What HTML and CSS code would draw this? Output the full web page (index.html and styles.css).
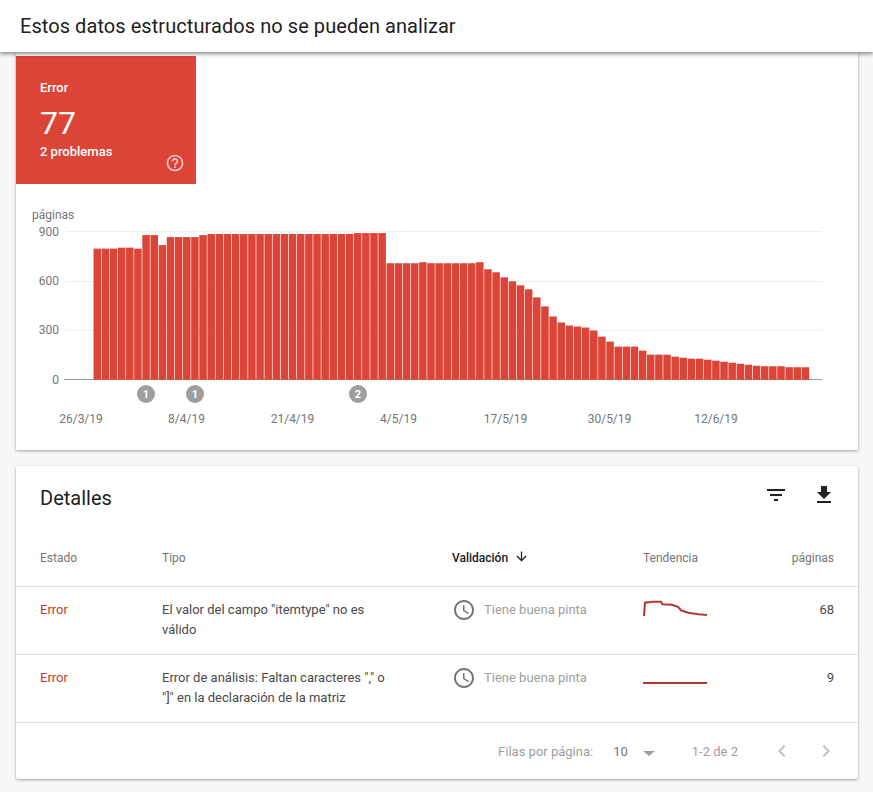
FILE: index.html
```html
<!DOCTYPE html>
<html lang="es">
<head>
<meta charset="utf-8">
<title>Estos datos estructurados no se pueden analizar</title>
<link rel="stylesheet" href="styles.css">
</head>
<body>
<header class="topbar"><h1 class="page-title">Estos datos estructurados no se pueden analizar</h1></header>
<main class="content">
  <section class="card card-summary">
    <div class="tile">
      <div class="tile-label">Error</div>
      <div class="tile-value">77</div>
      <div class="tile-sub">2 problemas</div>
      <svg class="tile-help" viewBox="0 0 24 24"><path d="M11 18h2v-2h-2v2zm1-16C6.48 2 2 6.48 2 12s4.48 10 10 10 10-4.48 10-10S17.52 2 12 2zm0 18c-4.41 0-8-3.59-8-8s3.59-8 8-8 8 3.59 8 8-3.59 8-8 8zm0-14c-2.21 0-4 1.79-4 4h2c0-1.1.9-2 2-2s2 .9 2 2c0 2-3 1.75-3 5h2c0-2.25 3-2.5 3-5 0-2.21-1.79-4-4-4z"/></svg>
    </div>
    <svg class="chart" viewBox="16 184 842 266" width="842" height="266">
      <text class="axis" x="32" y="219">páginas</text>
      <g class="grid">
        <line x1="66" x2="822" y1="231.5" y2="231.5"/>
        <line x1="66" x2="822" y1="281.5" y2="281.5"/>
        <line x1="66" x2="822" y1="330.5" y2="330.5"/>
      </g>
      <line class="base" x1="64" x2="822" y1="379.5" y2="379.5"/>
      <g class="axis axis-y">
        <text x="59" y="236">900</text>
        <text x="59" y="285">600</text>
        <text x="59" y="334">300</text>
        <text x="59" y="384">0</text>
      </g>
      <g class="bars" transform="matrix(1 0 0 -1.005 0 379.8)">
        <rect x="93.5" height="130.5"/><rect x="101.64" height="130.5"/><rect x="109.78" height="130.5"/><rect x="117.92" height="131.5"/><rect x="126.06" height="131.5"/><rect x="134.2" height="130.5"/><rect x="142.34" height="144"/><rect x="150.48" height="144"/><rect x="158.62" height="134"/><rect x="166.76" height="142"/>
        <rect x="174.9" height="142"/><rect x="183.04" height="142"/><rect x="191.18" height="142"/><rect x="199.32" height="144"/><rect x="207.46" height="145"/><rect x="215.6" height="145"/><rect x="223.74" height="145"/><rect x="231.88" height="145"/><rect x="240.02" height="145"/><rect x="248.16" height="145"/>
        <rect x="256.3" height="145"/><rect x="264.44" height="145"/><rect x="272.58" height="145"/><rect x="280.72" height="145"/><rect x="288.86" height="145"/><rect x="297" height="145"/><rect x="305.14" height="145"/><rect x="313.28" height="145"/><rect x="321.42" height="145"/><rect x="329.56" height="145"/>
        <rect x="337.7" height="145"/><rect x="345.84" height="145"/><rect x="353.98" height="146"/><rect x="362.12" height="146"/><rect x="370.26" height="146"/><rect x="378.4" height="146"/><rect x="386.54" height="116"/><rect x="394.68" height="116"/><rect x="402.82" height="116"/><rect x="410.96" height="116"/>
        <rect x="419.1" height="117"/><rect x="427.24" height="116"/><rect x="435.38" height="116"/><rect x="443.52" height="116"/><rect x="451.66" height="116"/><rect x="459.8" height="116"/><rect x="467.94" height="116"/><rect x="476.08" height="117"/><rect x="484.22" height="110"/><rect x="492.36" height="107"/>
        <rect x="500.5" height="102"/><rect x="508.64" height="98"/><rect x="516.78" height="94"/><rect x="524.92" height="90"/><rect x="533.06" height="82"/><rect x="541.2" height="73"/><rect x="549.34" height="63"/><rect x="557.48" height="57"/><rect x="565.62" height="54"/><rect x="573.76" height="53"/>
        <rect x="581.9" height="52"/><rect x="590.04" height="49"/><rect x="598.18" height="43"/><rect x="606.32" height="38"/><rect x="614.46" height="33"/><rect x="622.6" height="33"/><rect x="630.74" height="33"/><rect x="638.88" height="29"/><rect x="647.02" height="25"/><rect x="655.16" height="25"/>
        <rect x="663.3" height="25"/><rect x="671.44" height="23"/><rect x="679.58" height="22"/><rect x="687.72" height="21"/><rect x="695.86" height="21"/><rect x="704" height="20"/><rect x="712.14" height="19"/><rect x="720.28" height="18"/><rect x="728.42" height="17"/><rect x="736.56" height="16"/>
        <rect x="744.7" height="15"/><rect x="752.84" height="14"/><rect x="760.98" height="13.5"/><rect x="769.12" height="13.5"/><rect x="777.26" height="13.5"/><rect x="785.4" height="12.5"/><rect x="793.54" height="12.5"/><rect x="801.68" height="12.5"/>
      </g>
      <g class="marker"><circle cx="146" cy="394" r="9"/><text x="146" y="398">1</text></g>
      <g class="marker"><circle cx="195" cy="394" r="9"/><text x="195" y="398">1</text></g>
      <g class="marker"><circle cx="358" cy="394" r="9"/><text x="358" y="398">2</text></g>
      <g class="axis axis-x">
        <text x="81" y="423">26/3/19</text>
        <text x="186.5" y="423">8/4/19</text>
        <text x="292.5" y="423">21/4/19</text>
        <text x="398.5" y="423">4/5/19</text>
        <text x="505.5" y="423">17/5/19</text>
        <text x="609.5" y="423">30/5/19</text>
        <text x="716" y="423">12/6/19</text>
      </g>
    </svg>
  </section>

  <section class="card card-details">
    <div class="details-head">
      <h2 class="details-title">Detalles</h2>
      <div class="details-actions">
        <svg class="icon" viewBox="0 0 24 24"><path d="M10 18h4v-2h-4v2zM3 6v2h18V6H3zm3 7h12v-2H6v2z"/></svg>
        <svg class="icon" viewBox="0 0 24 24"><path d="M19 9h-4V3H9v6H5l7 7 7-7zM5 18v2h14v-2H5z"/></svg>
      </div>
    </div>
    <div class="row row-head">
      <div>Estado</div>
      <div>Tipo</div>
      <div class="sorted">Validación
        <svg class="sort-icon" viewBox="0 0 24 24"><path d="M20 12l-1.41-1.41L13 16.17V4h-2v12.17l-5.58-5.59L4 12l8 8 8-8z"/></svg>
      </div>
      <div>Tendencia</div>
      <div class="num">páginas</div>
    </div>
    <div class="row row-data">
      <div class="status">Error</div>
      <div class="type">El valor del campo "itemtype" no es válido</div>
      <div class="validation">
        <svg class="clock" viewBox="0 0 24 24"><path d="M11.99 2C6.47 2 2 6.48 2 12s4.47 10 9.99 10C17.52 22 22 17.52 22 12S17.52 2 11.99 2zM12 20c-4.42 0-8-3.58-8-8s3.58-8 8-8 8 3.58 8 8-3.58 8-8 8zm.5-13H11v6l5.25 3.15.75-1.23-4.5-2.67z"/></svg>
        <span>Tiene buena pinta</span>
      </div>
      <svg class="spark" viewBox="0 0 66 20" width="66" height="20"><polyline points="1,17 2,3.7 10,2.8 18,2.7 19.3,5.3 29,5.7 35.3,8 38,11.3 45.3,13.7 55.3,15.3 64,16"/></svg>
      <div class="num count">68</div>
    </div>
    <div class="row row-data">
      <div class="status">Error</div>
      <div class="type">Error de análisis: Faltan caracteres "," o "]" en la declaración de la matriz</div>
      <div class="validation">
        <svg class="clock" viewBox="0 0 24 24"><path d="M11.99 2C6.47 2 2 6.48 2 12s4.47 10 9.99 10C17.52 22 22 17.52 22 12S17.52 2 11.99 2zM12 20c-4.42 0-8-3.58-8-8s3.58-8 8-8 8 3.58 8 8-3.58 8-8 8zm.5-13H11v6l5.25 3.15.75-1.23-4.5-2.67z"/></svg>
        <span>Tiene buena pinta</span>
      </div>
      <svg class="spark" viewBox="0 0 66 20" width="66" height="20"><polyline points="0,16 64,16"/></svg>
      <div class="num count">9</div>
    </div>
    <div class="pager">
      <span class="pager-label">Filas por página:</span>
      <span class="pager-size">10</span>
      <span class="pager-caret"></span>
      <span class="pager-range">1-2 de 2</span>
      <svg class="chev" viewBox="0 0 24 24"><path d="M15.41 7.41L14 6l-6 6 6 6 1.41-1.41L10.83 12z"/></svg>
      <svg class="chev" viewBox="0 0 24 24"><path d="M10 6L8.59 7.41 13.17 12l-4.58 4.59L10 18l6-6z"/></svg>
    </div>
  </section>
</main>
</body>
</html>
```
FILE: styles.css
```css
* { box-sizing: border-box; }
html, body { margin: 0; height: 792px; overflow: hidden; }
body { background: #f8f8f8; font-family: Roboto, sans-serif; color: #212121; }

.topbar {
  position: relative;
  z-index: 2;
  height: 52px;
  background: #fff;
  display: flex;
  align-items: center;
  padding: 0 20px;
  box-shadow: 0 2px 4px rgba(0, 0, 0, .45);
}
.page-title { margin: 0; font-size: 20px; font-weight: 400; color: #212121; letter-spacing: .065px; }

.content { padding: 0 15px 0 16px; display: flex; flex-direction: column; gap: 16px; }
.card { background: #fff; box-shadow: 0 1px 3px rgba(0, 0, 0, .35); }
.card-summary { height: 398px; padding-top: 4px; }
.card-details { height: 313px; border-radius: 2px; }

.tile {
  position: relative;
  width: 180px;
  height: 128px;
  background: #db4437;
  color: #fff;
  padding: 24px 24px 0;
}
.tile-label { font-size: 13px; font-weight: 500; line-height: 16px; }
.tile-value { font-size: 32px; line-height: 40px; margin-top: 7px; }
.tile-sub { font-size: 13px; font-weight: 500; line-height: 16px; margin-top: 1px; }
.tile-help { position: absolute; right: 11px; bottom: 11px; width: 20px; height: 20px; fill: rgba(255, 255, 255, .7); }

.chart { display: block; }
.chart text { font-family: Roboto, sans-serif; }
.axis { font-size: 12px; fill: #757575; }
.axis-y { text-anchor: end; }
.axis-x { text-anchor: middle; }
.grid line { stroke: #eeeeee; stroke-width: 1; }
.base { stroke: #9e9e9e; stroke-width: 1; }
.bars rect { width: 7.5px; fill: #db4437; }
.marker circle { fill: #9e9e9e; }
.marker text { fill: #fff; font-size: 11px; font-weight: 700; text-anchor: middle; }

.details-head {
  height: 64px;
  padding: 17px 22px 0 24px;
  display: flex;
  justify-content: space-between;
  align-items: flex-start;
}
.details-title { margin: -1px 0 0; font-size: 20px; font-weight: 400; line-height: 32px; color: #212121; }
.details-actions { display: flex; gap: 24px; }
.icon { width: 24px; height: 24px; fill: #212121; }

.row {
  display: grid;
  grid-template-columns: 122px 290px 191px 1fr 60px;
  padding: 0 24px;
  border-bottom: 1px solid #e0e0e0;
}
.row-head {
  height: 57px;
  align-items: center;
  font-size: 12px;
  color: #757575;
  padding-bottom: 1px;
}
.sorted { color: #212121; font-weight: 500; display: flex; align-items: center; gap: 6px; }
.sort-icon { width: 15px; height: 15px; fill: #212121; margin-top: -3px; }
.num { text-align: right; }

.row-data { height: 68px; padding-top: 13px; font-size: 13px; line-height: 20px; color: #4a4a4a; }
.status { color: #c5392c; }
.type { max-width: 225px; }
.validation { display: flex; align-items: flex-start; gap: 8px; color: #9e9e9e; margin-top: -1px; }
.validation span { margin-top: 1px; }
.clock { width: 24px; height: 24px; fill: #757575; margin-top: -1px; }
.spark { margin-top: -1px; }
.spark polyline { fill: none; stroke: #b03a2e; stroke-width: 2; }
.count { color: #4a4a4a; }

.pager {
  height: 56px;
  display: flex;
  align-items: center;
  font-size: 13px;
  color: #9e9e9e;
  padding-right: 20px;
  justify-content: flex-end;
}
.pager-size { margin-left: 20px; color: #757575; }
.pager-caret {
  margin-left: 15px;
  margin-top: 5px;
  width: 0;
  height: 0;
  border-left: 6px solid transparent;
  border-right: 6px solid transparent;
  border-top: 5px solid #9e9e9e;
}
.pager-range { margin-left: 37px; margin-right: 32px; color: #9e9e9e; }
.chev { width: 24px; height: 24px; fill: #c4c4c4; }
.chev + .chev { margin-left: 20px; }
```
